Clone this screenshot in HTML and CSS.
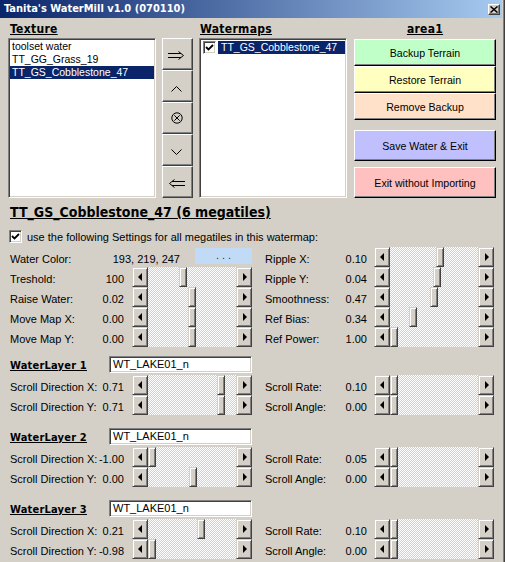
FILE: index.html
```html
<!DOCTYPE html>
<html lang="en">
<head>
<meta charset="utf-8">
<title>Tanita's WaterMill</title>
<link rel="stylesheet" href="styles.css">
</head>
<body>
<div class="window">
  <div class="titlebar">
    <span class="title">Tanita's WaterMill v1.0 (070110)</span>
    <span class="close"><svg width="8" height="7" viewBox="0 0 8 7"><path d="M0.5 0.5 L7.5 6.5 M7.5 0.5 L0.5 6.5" stroke="#000" stroke-width="1.5" fill="none"/></svg></span>
  </div>

  <div class="top">
    <div class="head h-tex">Texture</div>
    <div class="head h-maps">Watermaps</div>
    <div class="head h-area">area1</div>

    <div class="listbox l-tex">
      <div class="item">toolset water</div>
      <div class="item">TT_GG_Grass_19</div>
      <div class="item selected">TT_GS_Cobblestone_47</div>
    </div>

    <div class="mid">
      <button class="mbtn g-right"><svg width="17" height="9" viewBox="0 0 17 9"><path d="M0 2.5 H13 M0 6.5 H13 M10.5 0.5 L15.5 4.5 L10.5 8.5" stroke="#000" stroke-width="1" fill="none"/></svg></button>
      <button class="mbtn g-up"><svg width="11" height="6" viewBox="0 0 11 6"><path d="M0.5 5.5 L5.5 0.5 L10.5 5.5" stroke="#000" stroke-width="1" fill="none"/></svg></button>
      <button class="mbtn g-del"><svg width="12" height="12" viewBox="0 0 12 12"><circle cx="6" cy="6" r="5.2" stroke="#000" stroke-width="1" fill="none"/><path d="M3.3 3.3 L8.7 8.7 M8.7 3.3 L3.3 8.7" stroke="#000" stroke-width="1" fill="none"/></svg></button>
      <button class="mbtn g-down"><svg width="11" height="6" viewBox="0 0 11 6"><path d="M0.5 0.5 L5.5 5.5 L10.5 0.5" stroke="#000" stroke-width="1" fill="none"/></svg></button>
      <button class="mbtn g-left"><svg width="17" height="9" viewBox="0 0 17 9"><path d="M4 2.5 H17 M4 6.5 H17 M6.5 0.5 L1.5 4.5 L6.5 8.5" stroke="#000" stroke-width="1" fill="none"/></svg></button>
    </div>

    <div class="listbox l-maps">
      <div class="mapitem">
        <span class="chk"><svg width="9" height="9" viewBox="0 0 9 9"><path d="M1 4 L3.5 6.5 L8 2" stroke="#000" stroke-width="1.8" fill="none"/></svg></span>
        <span class="sel">TT_GS_Cobblestone_47</span>
      </div>
    </div>

    <div class="actions">
      <button class="btn small c-green">Backup Terrain</button>
      <button class="btn small c-yellow">Restore Terrain</button>
      <button class="btn small c-peach">Remove Backup</button>
      <button class="btn big c-blue save">Save Water &amp; Exit</button>
      <button class="btn big c-pink exit">Exit without Importing</button>
    </div>
  </div>

  <div class="maptitle">TT_GS_Cobblestone_47 (6 megatiles)</div>

  <div class="useall">
    <span class="chk"><svg width="9" height="9" viewBox="0 0 9 9"><path d="M1 4 L3.5 6.5 L8 2" stroke="#000" stroke-width="1.8" fill="none"/></svg></span>
    <span class="useall-text">use the following Settings for all megatiles in this watermap:</span>
  </div>

  <div class="grid settings">
    <div class="row">
      <span class="lbl">Water Color:</span><span class="val wc">193, 219, 247</span><span class="swatch">...</span>
    </div>
    <div class="row r">
      <span class="lbl">Ripple X:</span><span class="val">0.10</span>
      <div class="sb"><span class="arr l"></span><span class="track"><span class="thumb" style="left:46px"></span></span><span class="arr rt"></span></div>
    </div>

    <div class="row">
      <span class="lbl">Treshold:</span><span class="val">100</span>
      <div class="sb"><span class="arr l"></span><span class="track"><span class="thumb" style="left:31px"></span></span><span class="arr rt"></span></div>
    </div>
    <div class="row r">
      <span class="lbl">Ripple Y:</span><span class="val">0.04</span>
      <div class="sb"><span class="arr l"></span><span class="track"><span class="thumb" style="left:43px"></span></span><span class="arr rt"></span></div>
    </div>

    <div class="row">
      <span class="lbl">Raise Water:</span><span class="val">0.02</span>
      <div class="sb"><span class="arr l"></span><span class="track"><span class="thumb" style="left:40px"></span></span><span class="arr rt"></span></div>
    </div>
    <div class="row r">
      <span class="lbl">Smoothness:</span><span class="val">0.47</span>
      <div class="sb"><span class="arr l"></span><span class="track"><span class="thumb" style="left:40px"></span></span><span class="arr rt"></span></div>
    </div>

    <div class="row">
      <span class="lbl">Move Map X:</span><span class="val">0.00</span>
      <div class="sb"><span class="arr l"></span><span class="track"><span class="thumb" style="left:40px"></span></span><span class="arr rt"></span></div>
    </div>
    <div class="row r">
      <span class="lbl">Ref Bias:</span><span class="val">0.34</span>
      <div class="sb"><span class="arr l"></span><span class="track"><span class="thumb" style="left:19px"></span></span><span class="arr rt"></span></div>
    </div>

    <div class="row">
      <span class="lbl">Move Map Y:</span><span class="val">0.00</span>
      <div class="sb"><span class="arr l"></span><span class="track"><span class="thumb" style="left:40px"></span></span><span class="arr rt"></span></div>
    </div>
    <div class="row r">
      <span class="lbl">Ref Power:</span><span class="val">1.00</span>
      <div class="sb"><span class="arr l"></span><span class="track"><span class="thumb" style="left:0px"></span></span><span class="arr rt"></span></div>
    </div>
  </div>

  <div class="grid layer">
    <div class="layer-head"><span class="layer-name">WaterLayer 1</span><span class="input">WT_LAKE01_n</span></div>
    <div></div>
    <div class="row">
      <span class="lbl">Scroll Direction X:</span><span class="val">0.71</span>
      <div class="sb"><span class="arr l"></span><span class="track"><span class="thumb" style="left:69px"></span></span><span class="arr rt"></span></div>
    </div>
    <div class="row r">
      <span class="lbl">Scroll Rate:</span><span class="val">0.10</span>
      <div class="sb"><span class="arr l"></span><span class="track"><span class="thumb" style="left:0px"></span></span><span class="arr rt"></span></div>
    </div>
    <div class="row">
      <span class="lbl">Scroll Direction Y:</span><span class="val">0.71</span>
      <div class="sb"><span class="arr l"></span><span class="track"><span class="thumb" style="left:69px"></span></span><span class="arr rt"></span></div>
    </div>
    <div class="row r">
      <span class="lbl">Scroll Angle:</span><span class="val">0.00</span>
      <div class="sb"><span class="arr l"></span><span class="track"><span class="thumb" style="left:0px"></span></span><span class="arr rt"></span></div>
    </div>
  </div>

  <div class="grid layer">
    <div class="layer-head"><span class="layer-name">WaterLayer 2</span><span class="input">WT_LAKE01_n</span></div>
    <div></div>
    <div class="row">
      <span class="lbl">Scroll Direction X:</span><span class="val">-1.00</span>
      <div class="sb"><span class="arr l"></span><span class="track"><span class="thumb" style="left:0px"></span></span><span class="arr rt"></span></div>
    </div>
    <div class="row r">
      <span class="lbl">Scroll Rate:</span><span class="val">0.05</span>
      <div class="sb"><span class="arr l"></span><span class="track"><span class="thumb" style="left:0px"></span></span><span class="arr rt"></span></div>
    </div>
    <div class="row">
      <span class="lbl">Scroll Direction Y:</span><span class="val">0.00</span>
      <div class="sb"><span class="arr l"></span><span class="track"><span class="thumb" style="left:41px"></span></span><span class="arr rt"></span></div>
    </div>
    <div class="row r">
      <span class="lbl">Scroll Angle:</span><span class="val">0.00</span>
      <div class="sb"><span class="arr l"></span><span class="track"><span class="thumb" style="left:0px"></span></span><span class="arr rt"></span></div>
    </div>
  </div>

  <div class="grid layer">
    <div class="layer-head"><span class="layer-name">WaterLayer 3</span><span class="input">WT_LAKE01_n</span></div>
    <div></div>
    <div class="row">
      <span class="lbl">Scroll Direction X:</span><span class="val">0.21</span>
      <div class="sb"><span class="arr l"></span><span class="track"><span class="thumb" style="left:49px"></span></span><span class="arr rt"></span></div>
    </div>
    <div class="row r">
      <span class="lbl">Scroll Rate:</span><span class="val">0.10</span>
      <div class="sb"><span class="arr l"></span><span class="track"><span class="thumb" style="left:0px"></span></span><span class="arr rt"></span></div>
    </div>
    <div class="row">
      <span class="lbl">Scroll Direction Y:</span><span class="val">-0.98</span>
      <div class="sb"><span class="arr l"></span><span class="track"><span class="thumb" style="left:0px"></span></span><span class="arr rt"></span></div>
    </div>
    <div class="row r">
      <span class="lbl">Scroll Angle:</span><span class="val">0.00</span>
      <div class="sb"><span class="arr l"></span><span class="track"><span class="thumb" style="left:0px"></span></span><span class="arr rt"></span></div>
    </div>
  </div>
</div>
</body>
</html>
```

FILE: styles.css
```css
* { box-sizing: border-box; }

html, body {
  margin: 0;
  padding: 0;
}

body {
  width: 505px;
  height: 562px;
  overflow: hidden;
  background: #D4D0C8;
  color: #000;
  font-family: "Liberation Sans", Arial, sans-serif;
  font-size: 11px;
}

.window {
  width: 505px;
  height: 562px;
  padding-right: 3px;
  box-shadow: inset -1px 0 #404040, inset -2px 0 #808080;
}

/* ---------- title bar ---------- */
.titlebar {
  height: 18px;
  display: flex;
  align-items: center;
  justify-content: space-between;
  padding: 0 2px 0 4px;
  background: linear-gradient(to right, #0A246A, #A6CAF0);
}

.title {
  color: #fff;
  font-family: "DejaVu Sans Condensed", "DejaVu Sans", sans-serif;
  font-stretch: condensed;
  font-weight: bold;
  font-size: 11px;
  line-height: 18px;
  white-space: nowrap;
}

.close {
  width: 12px;
  height: 11px;
  display: flex;
  align-items: center;
  justify-content: center;
  background: #D4D0C8;
  border: 1px solid;
  border-color: #fff #404040 #404040 #fff;
  box-shadow: inset -1px -1px #808080;
}

/* ---------- top area ---------- */
.top {
  display: grid;
  grid-template-columns: 148px 31px 148px 143px;
  grid-template-rows: 20px 160px;
  column-gap: 6px;
  padding-left: 8px;
  grid-template-areas:
    "htex . hmaps harea"
    "ltex mid lmaps act";
}

.head {
  font-family: "DejaVu Sans Condensed", "DejaVu Sans", sans-serif;
  font-stretch: condensed;
  font-weight: bold;
  font-size: 12px;
  line-height: 14px;
  padding-top: 4px;
  text-decoration: underline;
  text-decoration-thickness: 1px;
  letter-spacing: 0.3px;
  white-space: nowrap;
}

.h-tex { grid-area: htex; padding-left: 2px; }
.h-maps { grid-area: hmaps; padding-left: 1px; }
.h-area { grid-area: harea; margin-left: 1px; text-align: center; }

.listbox {
  background: #fff;
  border: 1px solid;
  border-color: #808080 #fff #fff #808080;
  box-shadow: inset 1px 1px #404040, inset -1px -1px #D4D0C8;
  padding: 1px;
  overflow: hidden;
}

.l-tex { grid-area: ltex; }
.l-maps { grid-area: lmaps; }

.item {
  height: 13px;
  line-height: 13px;
  padding-left: 2px;
  font-size: 10.5px;
  white-space: nowrap;
}

.item.selected {
  background: #0A246A;
  color: #fff;
}

.mapitem {
  display: flex;
  align-items: center;
  height: 13px;
  margin-top: 1px;
  padding-left: 2px;
}

.mapitem .sel {
  flex: 1;
  height: 13px;
  line-height: 13px;
  margin-left: 2px;
  padding-left: 3px;
  font-size: 10.5px;
  background: #0A246A;
  color: #fff;
  white-space: nowrap;
}

.chk {
  width: 13px;
  height: 13px;
  flex: none;
  display: flex;
  align-items: center;
  justify-content: center;
  background: #fff;
  border: 1px solid;
  border-color: #808080 #fff #fff #808080;
  box-shadow: inset 1px 1px #404040, inset -1px -1px #D4D0C8;
}

/* middle button column */
.mid {
  grid-area: mid;
  display: flex;
  flex-direction: column;
}

.mbtn {
  appearance: none;
  margin: 0;
  padding: 0;
  flex: 1;
  display: flex;
  justify-content: center;
  align-items: center;
  background: #D4D0C8;
  border: 1px solid;
  border-color: #fff #404040 #404040 #fff;
  box-shadow: inset -1px -1px #808080;
}

.g-right svg { margin-top: 3px; margin-left: -2px; }
.g-up svg { margin-top: 6px; margin-left: -2px; }
.g-del svg { margin-top: 0; margin-left: -2px; }
.g-down svg { margin-top: 4px; margin-left: -2px; }
.g-left svg { margin-top: 2px; margin-left: -2px; }

/* action buttons */
.actions {
  grid-area: act;
  margin-left: 1px;
  padding-top: 1px;
  display: flex;
  flex-direction: column;
}

.btn {
  appearance: none;
  margin: 0;
  padding: 0;
  font-family: "Liberation Sans", Arial, sans-serif;
  font-size: 10.6px;
  color: #000;
  border: 1px solid;
  border-color: #fff #000 #000 #fff;
  box-shadow: inset -1px -1px #808080;
  text-align: center;
}

.btn.small { height: 27px; }
.btn.big { height: 31px; }
.btn.save { margin-top: 10px; }
.btn.exit { margin-top: 6px; }

.c-green { background: #C0FFC8; }
.c-yellow { background: #FFFFC0; }
.c-peach { background: #FFE0C8; }
.c-blue { background: #C0C0FF; }
.c-pink { background: #FFC0C0; }

/* ---------- map title & checkbox ---------- */
.maptitle {
  margin: 6px 0 0 10px;
  height: 16px;
  font-family: "DejaVu Sans Condensed", "DejaVu Sans", sans-serif;
  font-stretch: condensed;
  font-weight: bold;
  font-size: 14px;
  line-height: 16px;
  text-decoration: underline;
  text-decoration-thickness: 1px;
  white-space: nowrap;
}

.useall {
  display: flex;
  align-items: center;
  height: 13px;
  margin-top: 10px;
  padding-left: 9px;
}

.useall-text {
  margin-left: 5px;
  white-space: nowrap;
  line-height: 13px;
  padding-top: 1px;
}

/* ---------- settings grid ---------- */
.grid {
  display: grid;
  grid-template-columns: 242px 229px;
  grid-auto-rows: 20px;
  column-gap: 13px;
  padding-left: 10px;
}

.settings { margin-top: 4px; }
.layer { margin-top: 12px; }
.settings + .layer { margin-top: 8px; }

.row {
  display: flex;
  align-items: center;
  height: 20px;
}

.lbl, .val {
  align-self: stretch;
  line-height: 16px;
  padding-top: 4px;
  white-space: nowrap;
}

.lbl { flex: 1; }

.val.wc { margin-right: 15px; }

.swatch {
  align-self: flex-start;
  margin-top: 1px;
  width: 57px;
  height: 16px;
  background: rgb(193, 219, 247);
  text-align: center;
  line-height: 15px;
  letter-spacing: 3px;
  padding-left: 3px;
  color: #333;
}

/* scrollbar */
.sb {
  display: flex;
  width: 120px;
  height: 20px;
  margin-left: 8px;
}

.row.r .sb { margin-left: 7px; }

.arr, .thumb {
  background: #D4D0C8;
  border: 1px solid;
  border-color: #D4D0C8 #404040 #404040 #D4D0C8;
  box-shadow: inset 1px 1px #fff, inset -1px -1px #808080;
}

.arr {
  width: 16px;
  height: 20px;
  flex: none;
  display: flex;
  align-items: center;
  justify-content: center;
}

.arr::before {
  content: "";
  display: block;
  border-style: solid;
}

.arr.l::before {
  border-width: 4px 4px 4px 0;
  border-color: transparent #000 transparent transparent;
  margin-left: -1px;
}

.arr.rt::before {
  border-width: 4px 0 4px 4px;
  border-color: transparent transparent transparent #000;
  margin-left: 1px;
}

.track {
  flex: 1;
  position: relative;
  background: repeating-conic-gradient(#fff 0 25%, #D4D0C8 0 50%) 0 0 / 2px 2px;
}

.thumb {
  position: absolute;
  top: 0;
  bottom: 0;
  width: 8px;
}

/* ---------- water layers ---------- */
.layer-head {
  display: flex;
  height: 20px;
  align-items: flex-start;
}

.layer-name {
  flex: 1;
  font-family: "DejaVu Sans Condensed", "DejaVu Sans", sans-serif;
  font-stretch: condensed;
  font-weight: bold;
  font-size: 11px;
  line-height: 13px;
  padding-top: 4px;
  text-decoration: underline;
  text-decoration-thickness: 1px;
  letter-spacing: 0.2px;
  white-space: nowrap;
}

.input {
  width: 143px;
  height: 17px;
  margin-top: 1px;
  background: #fff;
  border: 1px solid;
  border-color: #808080 #fff #fff #808080;
  box-shadow: inset 1px 1px #404040, inset -1px -1px #D4D0C8;
  padding: 1px 0 0 3px;
  line-height: 13px;
  white-space: nowrap;
  overflow: hidden;
}
```
